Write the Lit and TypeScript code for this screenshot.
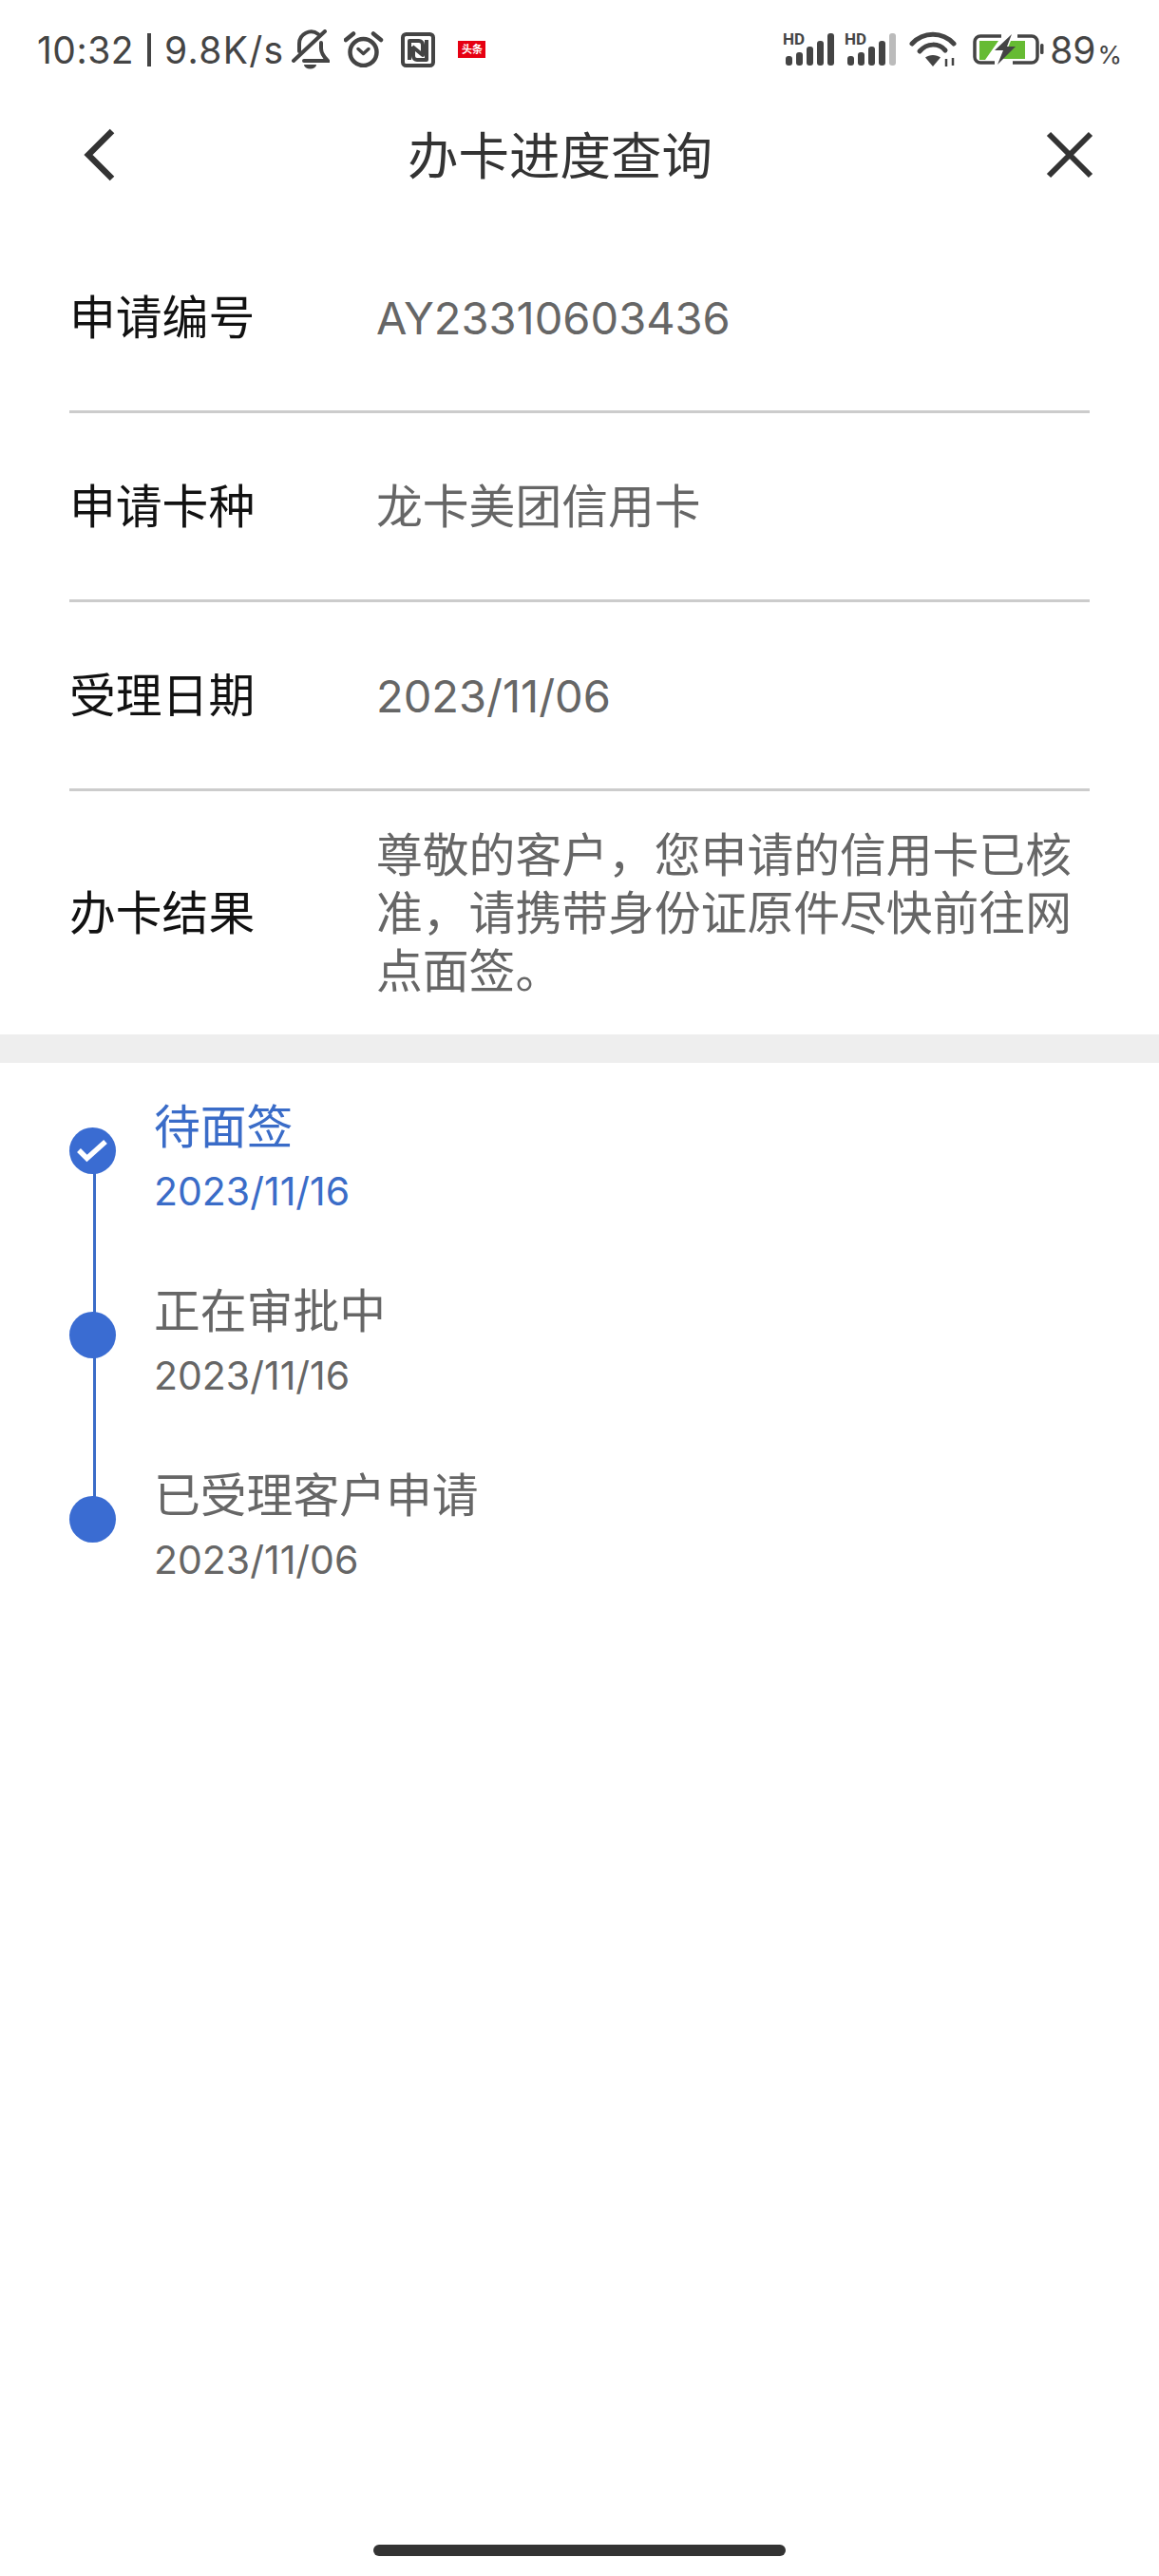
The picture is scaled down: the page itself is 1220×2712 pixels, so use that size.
import { LitElement, html, css, svg } from 'lit';
import { customElement } from 'lit/decorators.js';
import { classMap } from 'lit/directives/class-map.js';

const INFO = [
    { label: '申请编号', value: 'AY23310603436', latin: true },
    { label: '申请卡种', value: '龙卡美团信用卡', latin: false },
    { label: '受理日期', value: '2023/11/06', latin: true },
    { label: '办卡结果', value: '尊敬的客户，您申请的信用卡已核准，请携带身份证原件尽快前往网点面签。', latin: false },
];

const STEPS = [
    { name: '待面签', date: '2023/11/16', current: true },
    { name: '正在审批中', date: '2023/11/16', current: false },
    { name: '已受理客户申请', date: '2023/11/06', current: false },
];

const signal = (lastColor: string) => svg`
    <svg class="signal" width="55" height="40" viewBox="0 0 55 40">
        <text x="0" y="17" class="hd">HD</text>
        <rect x="3" y="29" width="7" height="10" rx="3" fill="#444"/>
        <rect x="14" y="25" width="7" height="14" rx="3" fill="#444"/>
        <rect x="25" y="19" width="7" height="20" rx="3" fill="#444"/>
        <rect x="36" y="13" width="7" height="26" rx="3" fill="#444"/>
        <rect x="47" y="5" width="7" height="34" rx="3" fill="${lastColor}"/>
    </svg>`;

@customElement('app-root')
export class AppRoot extends LitElement {
    static styles = css`
        :host {
            display: block;
            background: #fff;
            font-family: Inter, "Noto Sans CJK SC", sans-serif;
        }
        .page {
            min-height: 2712px;
            display: flex;
            flex-direction: column;
            box-sizing: border-box;
        }
        .status {
            height: 104px;
            display: flex;
            align-items: center;
            padding: 0 39px 0 39px;
            color: #444;
            font-size: 39px;
            flex: none;
        }
        .status svg { display: block; flex: none; }
        .clock { letter-spacing: 0.5px; }
        .pipe {
            width: 4px;
            height: 35px;
            margin: 0 14px 0 14px;
            background: #444;
            flex: none;
        }
        .speed { letter-spacing: 1.3px; margin-right: 8px; }
        .bell { margin-right: 15px; }
        .alarm { margin-right: 18px; }
        .nfc { margin-right: 24px; }
        .paper {
            width: 29px;
            height: 18px;
            background: #e60012;
            color: #fff;
            font-size: 11px;
            line-height: 18px;
            text-align: center;
            font-weight: 700;
            flex: none;
        }
        .right {
            margin-left: auto;
            display: flex;
            align-items: center;
        }
        .hd { font: 700 17px Roboto, sans-serif; fill: #444; }
        .signal { margin-bottom: 4px; }
        .signal + .signal { margin-left: 10px; }
        .wifi { margin-left: 13px; }
        .battery { margin-left: 17px; }
        .pct { margin-left: 6px; }
        .pct small { font-size: 26px; margin-left: 2px; }
        .nav {
            height: 118px;
            display: flex;
            align-items: center;
            padding-left: 86px;
            flex: none;
        }
        .nav svg { display: block; flex: none; }
        .nav h1 {
            margin: -6px 0 0 307px;
            font-size: 53.5px;
            font-weight: 400;
            color: #333;
            white-space: nowrap;
        }
        .close { margin-left: auto; margin-right: 69px; }
        .info { margin: 14px 73px 0 73px; }
        .row {
            display: flex;
            align-items: center;
            min-height: 199px;
            box-sizing: border-box;
            border-bottom: 3px solid #ccc;
            font-size: 48.8px;
            line-height: 61px;
        }
        .row:last-child {
            border-bottom: 0;
            min-height: 256px;
        }
        .label { width: 323px; flex: none; color: #111; }
        .value { color: #666; }
        .value.latin { font-size: 47px; }
        .band { height: 30px; background: #eee; flex: none; }
        .steps { padding: 30px 0 0 73px; }
        .step {
            position: relative;
            height: 194px;
            display: flex;
            color: #666;
        }
        .step:not(:last-child)::after {
            content: '';
            position: absolute;
            left: 25px;
            top: 62px;
            width: 3px;
            height: 194px;
            background: #3a6cc8;
        }
        .dot {
            position: relative;
            z-index: 1;
            width: 49px;
            height: 49px;
            margin: 38px 40px 0 0;
            border-radius: 50%;
            background: #3a6cd2;
            flex: none;
        }
        .dot svg { display: block; }
        .name { font-size: 48.8px; line-height: 70px; padding-top: 3px; }
        .date { font-size: 41px; line-height: 65px; }
        .step.current { color: #3a6cc8; }
        .home {
            margin: auto auto 21px auto;
            width: 434px;
            height: 12px;
            border-radius: 6px;
            background: #333;
            flex: none;
        }
    `;

    renderStatus() {
        return html`
            <div class="status">
                <span class="clock">10:32</span>
                <span class="pipe"></span>
                <span class="speed">9.8K/s</span>
                <svg class="bell" width="40" height="42" viewBox="0 0 40 42" fill="none" stroke="#444" stroke-width="4" stroke-linecap="round">
                    <path d="M8 23V15A12.500 12.500 0 0 1 28 5"/>
                    <path d="M31 14v6c0 5 3 9 7 13H13"/>
                    <path d="M2 33L35 2"/>
                    <path d="M13 37h13a6.500 4.500 0 0 1-13 0z" fill="#444" stroke="none"/>
                </svg>
                <svg class="alarm" width="42" height="38" viewBox="0 0 42 38" fill="none" stroke="#444" stroke-width="4.500" stroke-linecap="round" stroke-linejoin="round">
                    <circle cx="20.500" cy="22" r="14"/>
                    <path d="M15 18.500l5.500 5 5.500-5" stroke-width="3.500"/>
                    <path d="M2 9l8-6.500M31 2.500l8 6.500"/>
                </svg>
                <svg class="nfc" width="36" height="37" viewBox="0 0 36 37" fill="none" stroke="#444" stroke-width="4" stroke-linejoin="round">
                    <rect x="2" y="2" width="32" height="33" rx="3.500"/>
                    <path d="M9 29V9h10a4 4 0 0 1 4 4v11L12 15"/>
                    <path d="M27 8v21H17a4 4 0 0 1-4-4V15"/>
                </svg>
                <div class="paper">头条</div>
                <div class="right">
                    ${signal('#444')}
                    ${signal('#bbb')}
                    <svg class="wifi" width="50" height="38" viewBox="0 0 50 38" fill="none" stroke="#444" stroke-width="5" stroke-linecap="round">
                        <path d="M3 13C15 0 35 0 47 13"/>
                        <path d="M11 21C19 12 31 12 38 20"/>
                        <path d="M17 27.500C21 24 29 24 33 27.500L25 37z" fill="#444" stroke="none"/>
                        <path d="M39 29v8M46 28v8" stroke-width="2.500" stroke-linecap="butt"/>
                    </svg>
                    <svg class="battery" width="75" height="32" viewBox="0 0 75 32" fill="none">
                        <path d="M30 2H8a6 6 0 0 0-6 6v16a6 6 0 0 0 6 6h15M42 30h20a6 6 0 0 0 6-6V8a6 6 0 0 0-6-6H47" stroke="#444" stroke-width="3.500"/>
                        <path d="M7 7H27L13 27H7zM40 7H55V26H32z" fill="#66bb33"/>
                        <path d="M41 0L23 17h9l-6 15 19-19h-9z" fill="#444"/>
                        <rect x="71" y="10" width="3.500" height="11" rx="1.500" fill="#444"/>
                    </svg>
                    <span class="pct">89<small>%</small></span>
                </div>
            </div>`;
    }

    renderNav() {
        return html`
            <div class="nav">
                <svg width="36" height="56" viewBox="0 0 36 56" fill="none" stroke="#333" stroke-width="6.500">
                    <path d="M32 3L7 28l25 25"/>
                </svg>
                <h1>办卡进度查询</h1>
                <svg class="close" width="50" height="50" viewBox="0 0 50 50" fill="none" stroke="#333" stroke-width="6">
                    <path d="M3 3l44 44M47 3L3 47"/>
                </svg>
            </div>`;
    }

    render() {
        return html`
            <div class="page">
                ${this.renderStatus()}
                ${this.renderNav()}
                <div class="info">
                    ${INFO.map(r => html`
                        <div class="row">
                            <div class="label">${r.label}</div>
                            <div class=${classMap({ value: true, latin: r.latin })}>${r.value}</div>
                        </div>`)}
                </div>
                <div class="band"></div>
                <div class="steps">
                    ${STEPS.map(s => html`
                        <div class=${classMap({ step: true, current: s.current })}>
                            <div class="dot">
                                ${s.current ? html`
                                    <svg width="49" height="49" viewBox="0 0 49 49" fill="none" stroke="#fff" stroke-width="5.500">
                                        <path d="M10 24l8.500 8.500L38 15"/>
                                    </svg>` : ''}
                            </div>
                            <div>
                                <div class="name">${s.name}</div>
                                <div class="date">${s.date}</div>
                            </div>
                        </div>`)}
                </div>
                <div class="home"></div>
            </div>`;
    }
}
